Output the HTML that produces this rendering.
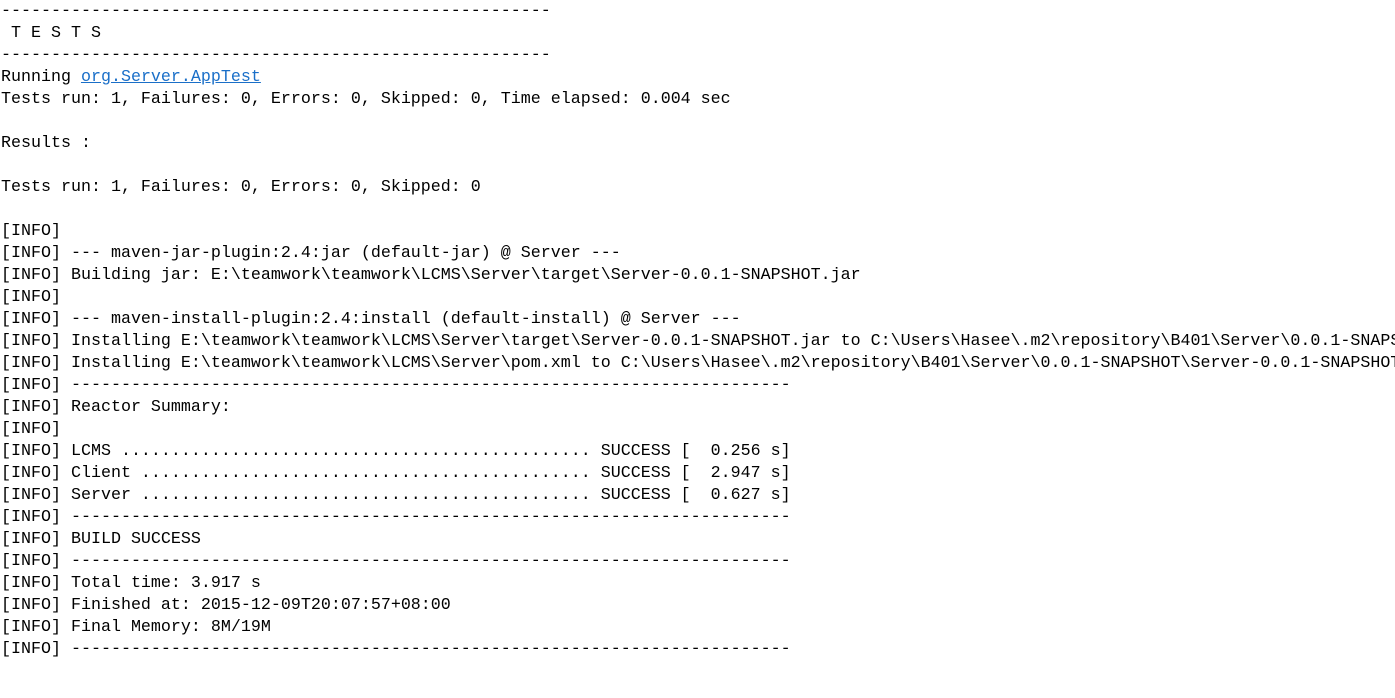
<!DOCTYPE html>
<html><head><meta charset="utf-8"><style>
html,body{margin:0;padding:0;background:#fff;width:1395px;height:698px;overflow:hidden}
pre{margin:0;padding:1px 0 0 1px;width:1394px;height:697px;overflow:hidden;font-family:"Liberation Mono",monospace;font-size:16.67px;line-height:22px;color:#000;white-space:pre}
a{color:#1a6fc8;text-decoration:underline}
</style></head><body><pre>-------------------------------------------------------
 T E S T S
-------------------------------------------------------
Running <a>org.Server.AppTest</a>
Tests run: 1, Failures: 0, Errors: 0, Skipped: 0, Time elapsed: 0.004 sec

Results :

Tests run: 1, Failures: 0, Errors: 0, Skipped: 0

[INFO]
[INFO] --- maven-jar-plugin:2.4:jar (default-jar) @ Server ---
[INFO] Building jar: E:\teamwork\teamwork\LCMS\Server\target\Server-0.0.1-SNAPSHOT.jar
[INFO]
[INFO] --- maven-install-plugin:2.4:install (default-install) @ Server ---
[INFO] Installing E:\teamwork\teamwork\LCMS\Server\target\Server-0.0.1-SNAPSHOT.jar to C:\Users\Hasee\.m2\repository\B401\Server\0.0.1-SNAPS
[INFO] Installing E:\teamwork\teamwork\LCMS\Server\pom.xml to C:\Users\Hasee\.m2\repository\B401\Server\0.0.1-SNAPSHOT\Server-0.0.1-SNAPSHOT
[INFO] ------------------------------------------------------------------------
[INFO] Reactor Summary:
[INFO]
[INFO] LCMS ............................................... SUCCESS [  0.256 s]
[INFO] Client ............................................. SUCCESS [  2.947 s]
[INFO] Server ............................................. SUCCESS [  0.627 s]
[INFO] ------------------------------------------------------------------------
[INFO] BUILD SUCCESS
[INFO] ------------------------------------------------------------------------
[INFO] Total time: 3.917 s
[INFO] Finished at: 2015-12-09T20:07:57+08:00
[INFO] Final Memory: 8M/19M
[INFO] ------------------------------------------------------------------------
</pre></body></html>
